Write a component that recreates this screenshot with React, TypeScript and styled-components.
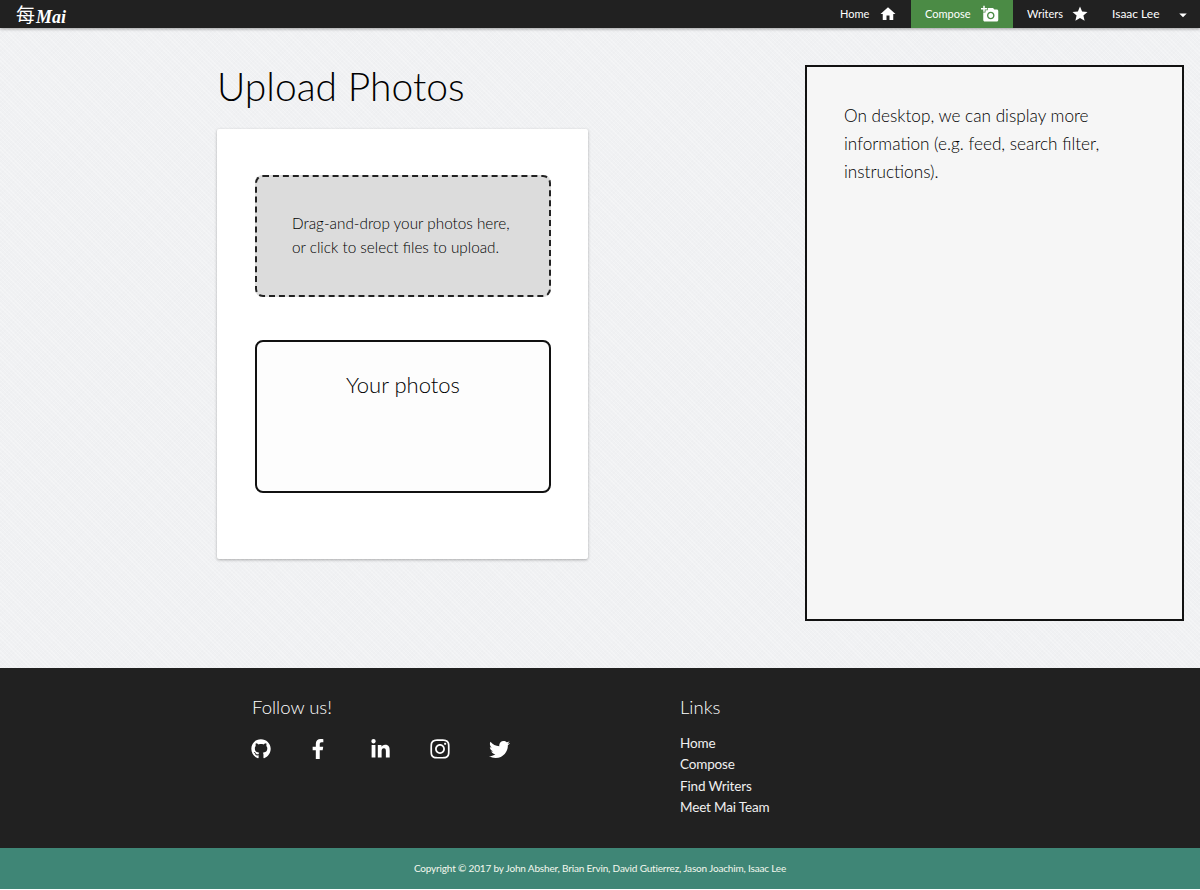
import { FC } from "react";
import styled, { createGlobalStyle } from "styled-components";
import { MdHome, MdAddAPhoto, MdStar, MdArrowDropDown } from "react-icons/md";
import { FaGithub, FaFacebookF, FaLinkedinIn, FaInstagram, FaTwitter } from "react-icons/fa";

const GlobalStyle = createGlobalStyle`
  html, body {
    margin: 0;
    padding: 0;
    background: #fff;
  }
  * {
    box-sizing: border-box;
  }
  body {
    font-family: Lato, "Noto Sans", sans-serif;
    color: #000;
  }
`;

const App: FC = () => {
  return (
    <Page>
      <GlobalStyle />
      <NavBar>
        <Logo>
          <LogoKanji>每</LogoKanji>
          <LogoName>Mai</LogoName>
        </Logo>
        <NavLinks>
          <NavItem $width={85}>
            Home
            <MdHome size={18} />
          </NavItem>
          <NavItem $active $width={102}>
            Compose
            <MdAddAPhoto size={18} />
          </NavItem>
          <NavItem $width={85} $rightPad={9}>
            Writers
            <MdStar size={18} />
          </NavItem>
          <UserItem>
            Isaac Lee
            <MdArrowDropDown size={18} />
          </UserItem>
        </NavLinks>
      </NavBar>

      <Main>
        <LeftColumn>
          <Title>Upload Photos</Title>
          <Card>
            <DropZone>
              Drag-and-drop your photos here,
              <br />
              or click to select files to upload.
            </DropZone>
            <PhotoBox>Your photos</PhotoBox>
          </Card>
        </LeftColumn>
        <SidePanel>
          On desktop, we can display more information (e.g. feed, search filter, instructions).
        </SidePanel>
      </Main>

      <Footer>
        <FooterColumn>
          <FooterHeading>Follow us!</FooterHeading>
          <SocialRow>
            <SocialIcon $width={56.5}><FaGithub size={20} /></SocialIcon>
            <SocialIcon $width={62.5}><FaFacebookF size={20} /></SocialIcon>
            <SocialIcon $width={58.5}><FaLinkedinIn size={21} /></SocialIcon>
            <SocialIcon $width={60.5}><FaInstagram size={22} /></SocialIcon>
            <SocialIcon $width={24}><FaTwitter size={21} /></SocialIcon>
          </SocialRow>
        </FooterColumn>
        <FooterColumn>
          <FooterHeading>Links</FooterHeading>
          <LinkList>
            <li>Home</li>
            <li>Compose</li>
            <li>Find Writers</li>
            <li>Meet Mai Team</li>
          </LinkList>
        </FooterColumn>
      </Footer>
      <Copyright>Copyright © 2017 by John Absher, Brian Ervin, David Gutierrez, Jason Joachim, Isaac Lee</Copyright>
    </Page>
  );
};

const Page = styled.div`
  width: 1200px;
  height: 890px;
  display: flex;
  flex-direction: column;
  overflow: hidden;
`;

const NavBar = styled.header`
  flex: none;
  height: 28px;
  display: flex;
  justify-content: space-between;
  background: #212121;
  box-shadow: 0 1px 3px rgba(0, 0, 0, 0.35);
  position: relative;
  z-index: 1;
`;

const Logo = styled.div`
  display: flex;
  align-items: center;
  padding-left: 16px;
  color: #fff;
`;

const LogoKanji = styled.span`
  font-family: "Noto Sans CJK JP", sans-serif;
  font-size: 19px;
  font-weight: 400;
  line-height: 28px;
`;

const LogoName = styled.span`
  font-family: "Liberation Serif", serif;
  font-style: italic;
  font-weight: 700;
  font-size: 18px;
  line-height: 22px;
  margin: 6px 0 0 1px;
`;

const NavLinks = styled.nav`
  display: flex;
`;

const NavItem = styled.a<{ $active?: boolean; $width: number; $rightPad?: number }>`
  width: ${(p) => p.$width}px;
  display: flex;
  align-items: center;
  justify-content: space-between;
  padding: 0 ${(p) => p.$rightPad ?? 14}px 2px 14px;
  font-size: 11px;
  color: #fff;
  background: ${(p) => (p.$active ? "#4b8b45" : "transparent")};
  svg {
    margin-top: 2px;
  }
`;

const UserItem = styled.a`
  width: 102px;
  display: flex;
  align-items: center;
  justify-content: space-between;
  padding: 0 8px 1px 14px;
  font-size: 12px;
  color: #fff;
  svg {
    margin-top: 3px;
  }
`;

const Main = styled.main`
  flex: none;
  height: 640px;
  display: flex;
  justify-content: space-between;
  padding: 37px 16px 0 217px;
  background-color: #f0f1f3;
  background-image: repeating-linear-gradient(
    45deg,
    rgba(255, 255, 255, 0.25) 0 1px,
    transparent 1px 3px
  ),
  repeating-linear-gradient(
    -45deg,
    rgba(0, 0, 0, 0.008) 0 1px,
    transparent 1px 3px
  );
`;

const LeftColumn = styled.section`
  width: 371px;
`;

const Title = styled.h1`
  margin: -1px 0 20px 0;
  height: 45px;
  font-size: 39px;
  font-weight: 300;
  line-height: 45px;
  white-space: nowrap;
  color: #000;
`;

const Card = styled.div`
  height: 430px;
  padding: 46px 37px 0 38px;
  background: #fff;
  border-radius: 2px;
  box-shadow: 0 1px 3px rgba(0, 0, 0, 0.3);
`;

const DropZone = styled.div`
  height: 122px;
  padding: 34px 0 0 35px;
  background: #dcdcdc;
  border: 2px dashed #222;
  border-radius: 8px;
  font-size: 15.3px;
  font-weight: 300;
  line-height: 24px;
  white-space: nowrap;
  color: #000;
`;

const PhotoBox = styled.div`
  height: 153px;
  margin-top: 43px;
  padding-top: 28px;
  background: #fdfdfd;
  border: 2px solid #111;
  border-radius: 8px;
  font-size: 22px;
  font-weight: 300;
  line-height: 30px;
  text-align: center;
`;

const SidePanel = styled.aside`
  width: 379px;
  height: 556px;
  padding: 35px 36px 0 37px;
  background: #f6f6f6;
  border: 2px solid #111;
  font-size: 17.2px;
  font-weight: 300;
  line-height: 28px;
`;

const Footer = styled.footer`
  flex: none;
  height: 180px;
  display: grid;
  grid-template-columns: 428px 1fr;
  padding: 25px 0 0 252px;
  background: #212121;
  color: #fff;
`;

const FooterColumn = styled.div`
  display: flex;
  flex-direction: column;
`;

const FooterHeading = styled.h3`
  margin: 0;
  font-size: 18.5px;
  font-weight: 300;
  line-height: 28px;
`;

const SocialRow = styled.div`
  display: flex;
  margin: 16px 0 0 -1px;
`;

const SocialIcon = styled.a<{ $width: number }>`
  width: ${(p) => p.$width}px;
  height: 24px;
  display: flex;
  align-items: center;
  color: #fff;
`;

const LinkList = styled.ul`
  margin: 12px 0 0;
  padding: 0;
  list-style: none;
  font-size: 13.5px;
  font-weight: 400;
  line-height: 21.4px;
  letter-spacing: -0.15px;
  color: #f0f0f0;
`;

const Copyright = styled.div`
  flex: none;
  height: 41px;
  display: flex;
  align-items: center;
  justify-content: center;
  padding-bottom: 1px;
  background: #3f8676;
  color: #f4f8ee;
  font-size: 10px;
  font-weight: 400;
  letter-spacing: -0.17px;
`;

export default App;
